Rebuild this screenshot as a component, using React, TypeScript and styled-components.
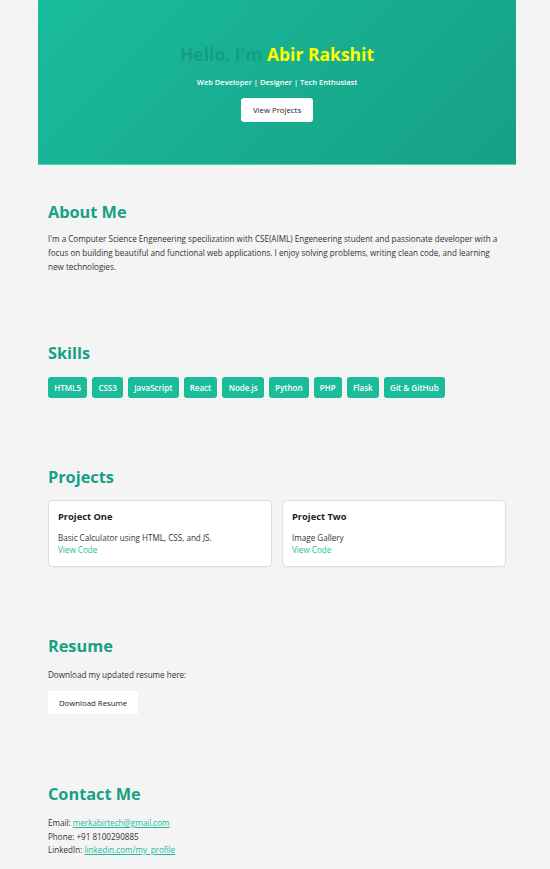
import React from "react";
import styled, { createGlobalStyle } from "styled-components";

const Global = createGlobalStyle`
  html, body { margin: 0; padding: 0; background: #f4f4f4; }
  body { font-family: "Open Sans", "Noto Sans", sans-serif; color: #333; }
  * { box-sizing: border-box; }
`;

const Page = styled.div`
  width: 478px;
  margin-left: 38px;
  padding-bottom: 20px;
`;

const Hero = styled.header`
  height: 165px;
  background: linear-gradient(135deg, #1abc9c, #16a085);
  border-bottom: 1px solid #4fd3b8;
  display: flex;
  flex-direction: column;
  align-items: center;
  padding-top: 41px;
`;

const HeroTitle = styled.h1`
  margin: 0;
  font-size: 17.5px;
  line-height: 26px;
  font-weight: 700;
  color: #149d81;
`;

const Name = styled.span`
  color: #ffff00;
`;

const Tagline = styled.p`
  margin: 9px 0 0;
  font-size: 7.5px;
  line-height: 12px;
  font-weight: 600;
  color: #ffffff;
`;

const Button = styled.a`
  display: inline-flex;
  align-items: center;
  justify-content: center;
  height: 24px;
  padding: 0 10px;
  background: #ffffff;
  color: #222;
  font-size: 7.8px;
  border-radius: 3px;
  text-decoration: none;
`;

const HeroButton = styled(Button)`
  margin-top: 10px;
  width: 72px;
  padding: 0;
`;

const Section = styled.section<{ $top: number }>`
  padding: ${(p) => p.$top}px 10px 0;
`;

const Heading = styled.h2`
  margin: 0;
  font-size: 16.3px;
  line-height: 24px;
  font-weight: 700;
  color: #16a085;
`;

const Text = styled.p<{ $mt?: number }>`
  margin: ${(p) => p.$mt ?? 8}px 0 0;
  font-size: 8.1px;
  line-height: 14px;
  color: #333;
`;

const Tags = styled.div`
  display: flex;
  flex-wrap: wrap;
  gap: 5px;
  margin-top: 12px;
`;

const Tag = styled.span`
  display: inline-flex;
  align-items: center;
  height: 21px;
  padding: 0 6.2px;
  background: #1abc9c;
  color: #fff;
  font-size: 8px;
  font-weight: 600;
  border-radius: 3px;
`;

const Cards = styled.div`
  display: grid;
  grid-template-columns: 1fr 1fr;
  gap: 10px;
  margin-top: 11px;
`;

const Card = styled.div`
  height: 67px;
  background: #fff;
  border: 1px solid #dedede;
  border-radius: 5px;
  padding: 9px 9px;
  box-shadow: 0 1px 2px rgba(0,0,0,0.05);
`;

const CardTitle = styled.h3`
  margin: 0;
  font-size: 9.3px;
  line-height: 14px;
  font-weight: 700;
  color: #222;
`;

const CardText = styled.p`
  margin: 8px 0 0;
  font-size: 8.1px;
  line-height: 12px;
`;

const CardLink = styled.a`
  display: block;
  font-size: 8.1px;
  line-height: 12px;
  color: #1abc9c;
  text-decoration: none;
`;

const ResumeButton = styled(Button)`
  margin-top: 9px;
  width: 90px;
  height: 23px;
  border-radius: 0;
  padding: 0;
`;

const ContactList = styled.div`
  margin-top: 10px;
`;

const ContactLine = styled.p`
  margin: 0;
  font-size: 8.1px;
  line-height: 13.5px;
`;

const ContactLink = styled.a`
  color: #1abc9c;
  text-decoration: underline;
`;

const skills = ["HTML5", "CSS3", "JavaScript", "React", "Node.js", "Python", "PHP", "Flask", "Git & GitHub"];

export default function App() {
  return (
    <>
      <Global />
      <Page>
        <Hero>
          <HeroTitle>
            Hello, I'm <Name>Abir Rakshit</Name>
          </HeroTitle>
          <Tagline>Web Developer | Designer | Tech Enthusiast</Tagline>
          <HeroButton href="#projects">View Projects</HeroButton>
        </Hero>

        <Section $top={35}>
          <Heading>About Me</Heading>
          <Text>
            I'm a Computer Science Engeneering specilization with CSE(AIML) Engeneering student and passionate developer with a focus on building beautiful and functional web applications. I enjoy solving problems, writing clean code, and learning new technologies.
          </Text>
        </Section>

        <Section $top={67}>
          <Heading>Skills</Heading>
          <Tags>
            {skills.map((s) => (
              <Tag key={s}>{s}</Tag>
            ))}
          </Tags>
        </Section>

        <Section $top={67} id="projects">
          <Heading>Projects</Heading>
          <Cards>
            <Card>
              <CardTitle>Project One</CardTitle>
              <CardText>Basic Calculator using HTML, CSS, and JS.</CardText>
              <CardLink href="#">View Code</CardLink>
            </Card>
            <Card>
              <CardTitle>Project Two</CardTitle>
              <CardText>Image Gallery</CardText>
              <CardLink href="#">View Code</CardLink>
            </Card>
          </Cards>
        </Section>

        <Section $top={67}>
          <Heading>Resume</Heading>
          <Text $mt={10}>Download my updated resume here:</Text>
          <ResumeButton href="#">Download Resume</ResumeButton>
        </Section>

        <Section $top={68}>
          <Heading>Contact Me</Heading>
          <ContactList>
            <ContactLine>
              Email: <ContactLink href="#">merkabirtech@gmail.com</ContactLink>
            </ContactLine>
            <ContactLine>Phone: +91 8100290885</ContactLine>
            <ContactLine>
              LinkedIn: <ContactLink href="#">linkedin.com/my_profile</ContactLink>
            </ContactLine>
          </ContactList>
        </Section>
      </Page>
    </>
  );
}
